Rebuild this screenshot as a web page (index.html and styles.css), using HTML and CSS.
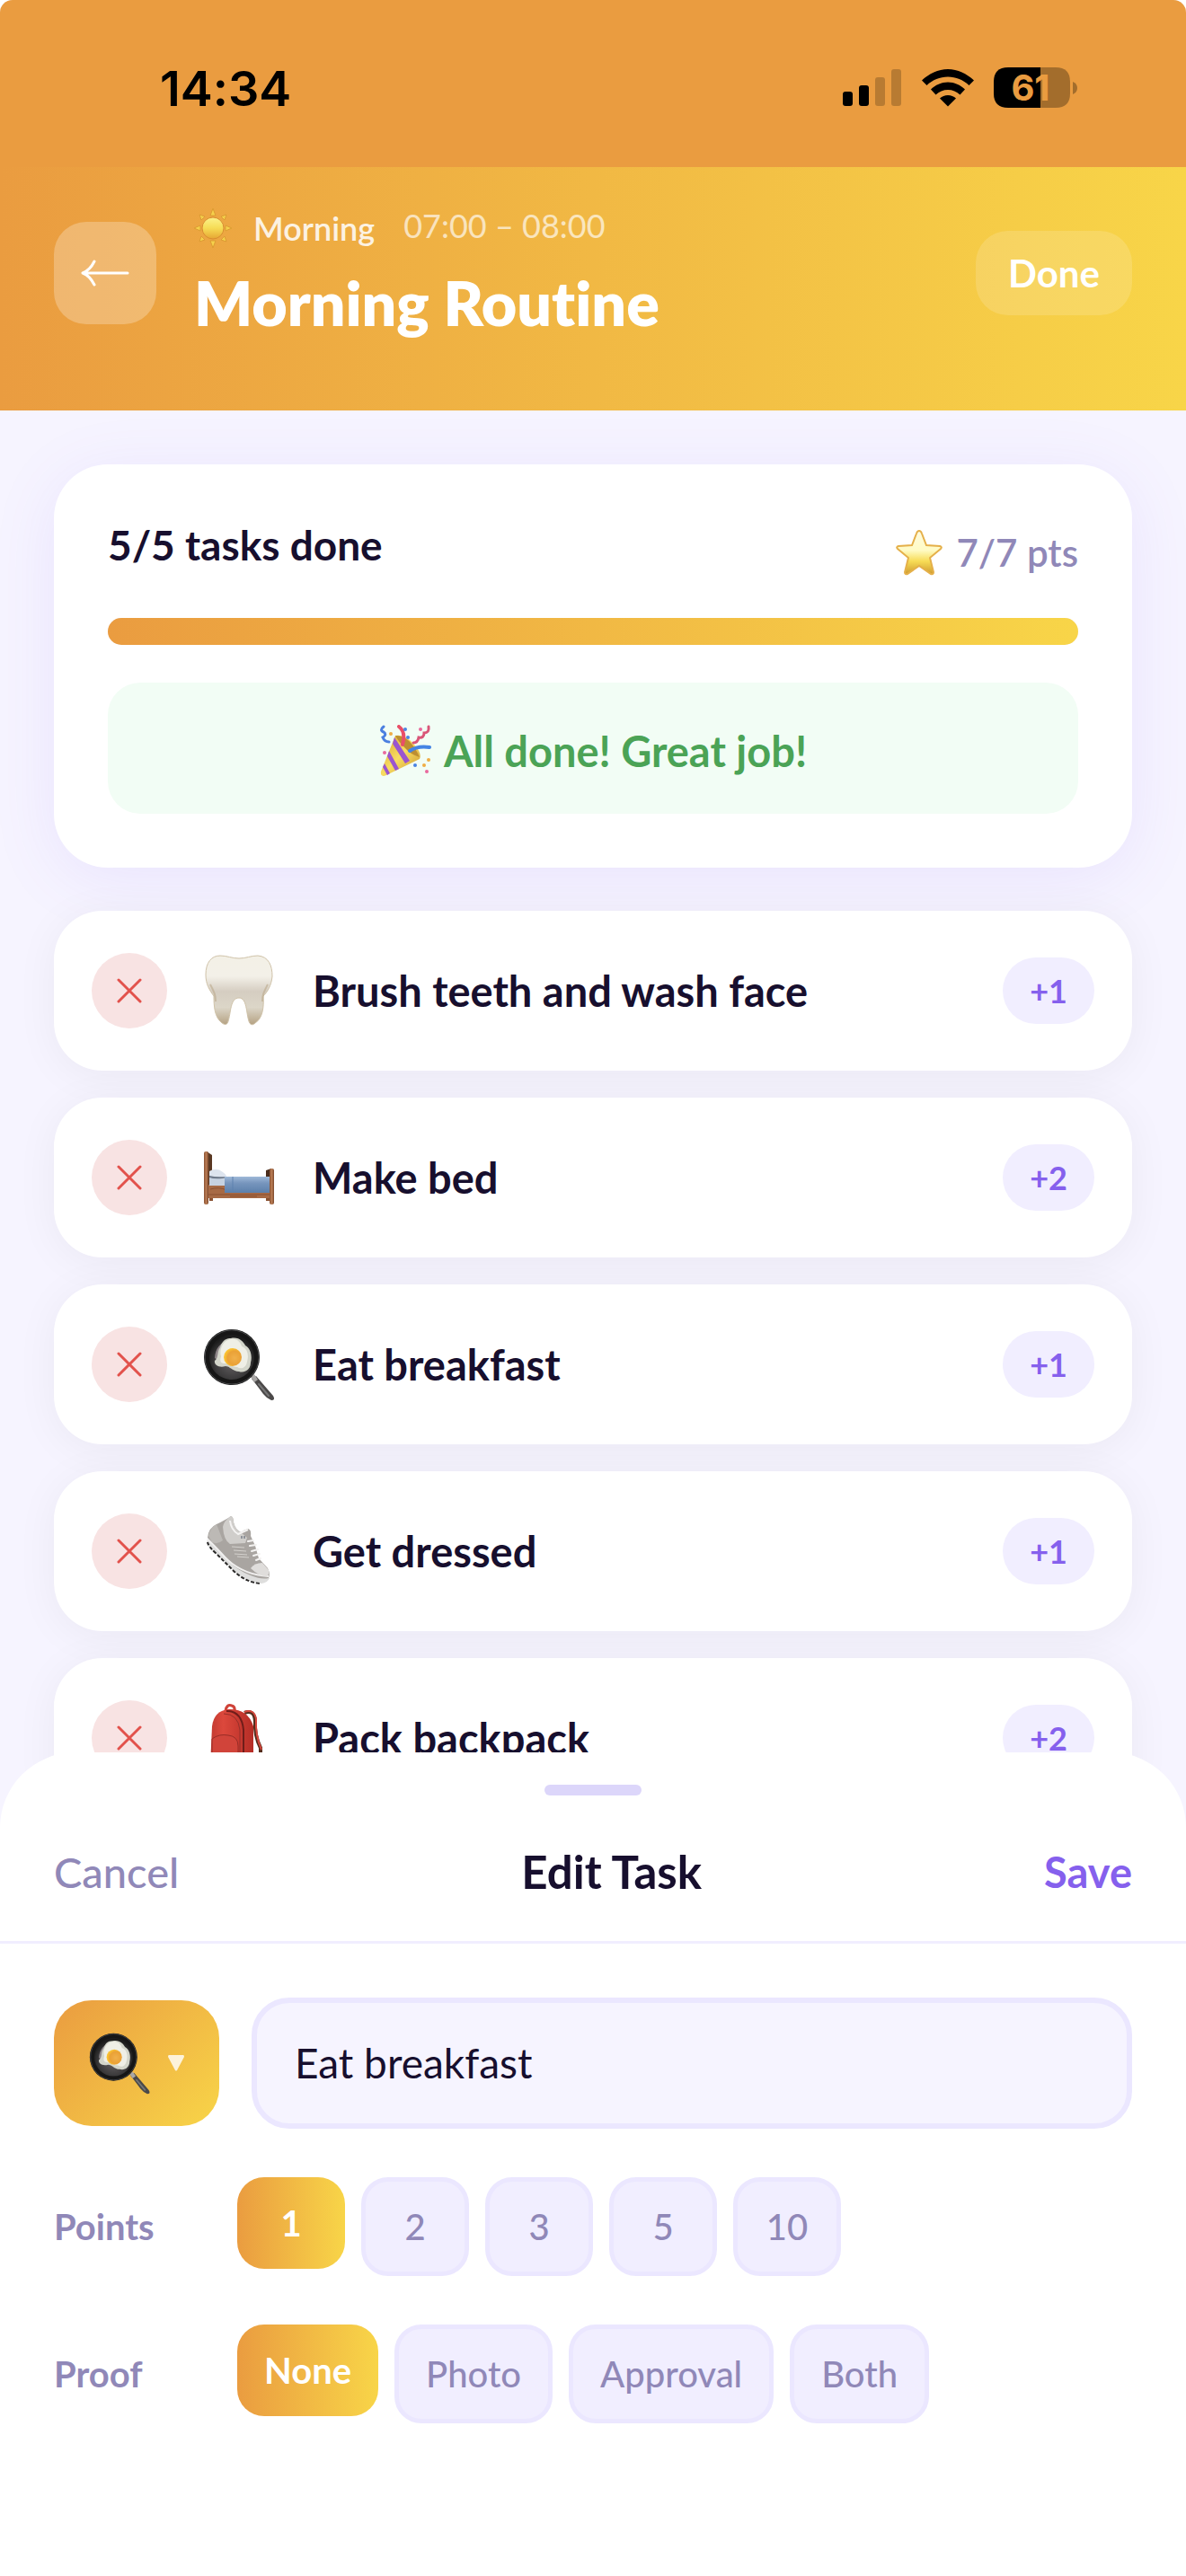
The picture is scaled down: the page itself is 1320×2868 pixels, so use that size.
FILE: index.html
```html
<!DOCTYPE html>
<html lang="en">
<head>
    <meta charset="UTF-8">
    <meta name="viewport" content="width=device-width, initial-scale=1.0">
    <title>Morning Routine</title>
    <link rel="stylesheet" href="styles.css">
</head>
<body>
    <!-- shared icons -->
    <svg class="defs" width="0" height="0" aria-hidden="true">
        <defs>
            <radialGradient id="panInside" cx="50%" cy="60%" r="55%">
                <stop offset="0" stop-color="#666264"/>
                <stop offset="0.7" stop-color="#3b3a3b"/>
                <stop offset="1" stop-color="#1c1c1c"/>
            </radialGradient>
            <radialGradient id="yolk" cx="60%" cy="55%" r="55%">
                <stop offset="0" stop-color="#f0b04a"/>
                <stop offset="0.7" stop-color="#eaa136"/>
                <stop offset="1" stop-color="#fbc22f"/>
            </radialGradient>
            <linearGradient id="gold" x1="0" y1="0" x2="0" y2="1">
                <stop offset="0" stop-color="#fbf28a"/>
                <stop offset="0.5" stop-color="#f6dc55"/>
                <stop offset="1" stop-color="#e6a633"/>
            </linearGradient>
            <linearGradient id="starFill" x1="0" y1="0" x2="0" y2="1">
                <stop offset="0" stop-color="#fffbe0"/>
                <stop offset="0.45" stop-color="#fffbc4"/>
                <stop offset="0.7" stop-color="#f7dc56"/>
                <stop offset="1" stop-color="#cf9b30"/>
            </linearGradient>
            <linearGradient id="cone" x1="0" y1="0" x2="1" y2="1">
                <stop offset="0" stop-color="#d9a42c"/>
                <stop offset="0.5" stop-color="#f8dc62"/>
                <stop offset="1" stop-color="#c8932a"/>
            </linearGradient>
            <linearGradient id="enamel" x1="0" y1="0" x2="0" y2="1">
                <stop offset="0" stop-color="#f3f0e6"/>
                <stop offset="0.3" stop-color="#f3f0e8"/>
                <stop offset="0.52" stop-color="#d5cdc1"/>
                <stop offset="0.75" stop-color="#dcd6c8"/>
                <stop offset="1" stop-color="#b5a283"/>
            </linearGradient>
            <linearGradient id="blanket" x1="0" y1="0" x2="0" y2="1">
                <stop offset="0" stop-color="#9fb9d8"/>
                <stop offset="0.4" stop-color="#7795bd"/>
                <stop offset="1" stop-color="#5c80ab"/>
            </linearGradient>
            <linearGradient id="wood" x1="0" y1="0" x2="1" y2="0">
                <stop offset="0" stop-color="#8a5233"/>
                <stop offset="0.5" stop-color="#b97c54"/>
                <stop offset="1" stop-color="#7c482c"/>
            </linearGradient>
            <linearGradient id="bag" x1="0" y1="0" x2="1" y2="0">
                <stop offset="0" stop-color="#c23a30"/>
                <stop offset="0.3" stop-color="#dc483c"/>
                <stop offset="1" stop-color="#b52d26"/>
            </linearGradient>
            <symbol id="cross" viewBox="0 0 28 28">
                <path d="M2 2L26 26M26 2L2 26" fill="none" stroke="#e2524c" stroke-width="3" stroke-linecap="round"/>
            </symbol>
            <symbol id="pan" viewBox="0 0 82 82">
                <path d="M54 57L59 54L78 76Q81 81 76 81Q71 79 67 74Q62 67 54 57Z" fill="#4b4949"/>
                <path d="M53 55L57 52L61 58L57 61Z" fill="#a9a7a6"/>
                <path d="M62 63L73 76" stroke="#777" stroke-width="2" stroke-linecap="round"/>
                <circle cx="32" cy="33" r="31" fill="#161616"/>
                <circle cx="32" cy="33" r="30" fill="none" stroke="#48494a" stroke-width="1"/>
                <circle cx="32" cy="33" r="25" fill="url(#panInside)"/>
                <path d="M13 34Q14 18 29 14Q18 22 18 38Z" fill="#8d8588"/>
                <path d="M31 12C40 10 45 16 47 20C53 23 55 32 53 39C53 47 46 51 40 49C33 49 30 43 25 43C18 45 12 42 13 37C18 33 15 27 19 22C21 16 24 12 31 12Z" fill="#d3d5ca"/>
                <path d="M31 13C38 12 42 17 43 21C50 23 51 32 49 38C48 45 42 47 38 44C33 44 29 41 25 40C20 40 18 38 20 32C18 26 21 14 31 13Z" fill="#efefe6"/>
                <circle cx="33" cy="33" r="10" fill="url(#yolk)"/>
            </symbol>
        </defs>
    </svg>

    <div class="status-bar">
        <span class="clock">14:34</span>
        <div class="status-icons">
            <svg width="66" height="42" viewBox="0 0 66 42">
                <rect x="0" y="25" width="11" height="16" rx="3"/>
                <rect x="18" y="18" width="11" height="23" rx="3"/>
                <rect x="36" y="9" width="11" height="32" rx="3" opacity="0.21"/>
                <rect x="54" y="0" width="11" height="41" rx="3" opacity="0.21"/>
            </svg>
            <svg width="58" height="42" viewBox="0 0 58 42">
                <path d="M29 0C40 0 50 5 58 12.500L52.500 18C46 12 38 8.500 29 8.500C20 8.500 12 12 5.500 18L0 12.500C8 5 18 0 29 0Z"/>
                <path d="M29 14.500C36 14.500 43 17.500 48 22.500L42.500 28.500C39 25 34 23 29 23C24 23 19 25 15.500 28.500L10 22.500C15 17.500 22 14.500 29 14.500Z"/>
                <path d="M29 29C32.500 29 35.500 30.500 38 32.500L29 41.500L20 32.500C22.500 30.500 25.500 29 29 29Z"/>
            </svg>
            <svg width="94" height="46" viewBox="0 0 94 46">
                <path d="M16 0H52V45H16Q0 45 0 29V16Q0 0 16 0Z"/>
                <path d="M52 0H69Q85 0 85 16V29Q85 45 69 45H52Z" opacity="0.3"/>
                <path d="M88 16Q93 18 93 23Q93 28 88 30Z" opacity="0.3"/>
                <text class="battery-text" x="41" y="37" text-anchor="middle">61</text>
            </svg>
        </div>
    </div>

    <header class="header">
        <button class="back" aria-label="Back">
            <svg width="54" height="30" viewBox="0 0 54 30" fill="none" stroke="#fff" stroke-width="3" stroke-linecap="round" stroke-linejoin="round">
                <path d="M52 15H2M15 2Q10 12 2 15Q10 18 15 28"/>
            </svg>
        </button>
        <div class="heading">
            <div class="meta">
                <svg width="42" height="44" viewBox="0 0 42 44">
                    <g fill="#f5d04b" stroke="#dc9c33" stroke-width="1">
                        <path d="M21 0L24 8H18Z"/>
                        <path d="M21 44L24 36H18Z"/>
                        <path d="M0 22L7 19V25Z"/>
                        <path d="M42 22L35 19V25Z"/>
                        <path d="M6 7L12 9L8 13Z"/>
                        <path d="M36 7L34 13L30 9Z"/>
                        <path d="M6 37L8 31L12 35Z"/>
                        <path d="M36 37L30 35L34 31Z"/>
                    </g>
                    <circle cx="21" cy="22" r="12" fill="url(#gold)" stroke="#d98d31" stroke-width="1"/>
                </svg>
                <span class="period">Morning</span>
                <span class="time">07:00 – 08:00</span>
            </div>
            <h1>Morning Routine</h1>
        </div>
        <button class="done">Done</button>
    </header>

    <main class="content">
        <section class="progress-card">
            <div class="progress-head">
                <h2>5/5 tasks done</h2>
                <span class="points-total">
                    <svg width="54" height="52" viewBox="0 0 54 52">
                        <path d="M27 2Q29 2 30 5L35 18L50 19Q53 20 51 22L39 32L43 48Q43 51 40 50L27 41L14 50Q11 51 11 48L15 32L3 22Q1 20 4 19L19 18L24 5Q25 2 27 2Z" fill="url(#starFill)" stroke="#e5b04a" stroke-width="2"/>
                    </svg>
                    7/7 pts
                </span>
            </div>
            <div class="bar"><div class="bar-fill" style="width: 100%"></div></div>
            <div class="banner">
                <svg width="58" height="58" viewBox="0 0 58 58">
                    <path d="M18 12Q29 10 39 22Q48 32 45 38L8 56Q1 59 2 52Z" fill="url(#cone)"/>
                    <path d="M15 21L29 43L34 40L17 14ZM9 35L18 51L22 49L11 29ZM4 47L9 56L12 54L6 43Z" fill="#9a55cf"/>
                    <path d="M18 12Q34 11 45 36Q35 33 29 26Q21 18 18 12Z" fill="#bd8e31"/>
                    <path d="M22 2Q30 8 26 22" fill="none" stroke="#e94f68" stroke-width="4" stroke-linecap="round"/>
                    <path d="M34 29Q43 23 56 25" fill="none" stroke="#4484e4" stroke-width="4" stroke-linecap="round"/>
                    <path d="M5 2Q0 6 5 8Q9 11 4 14Q6 19 11 19" fill="none" stroke="#4b7fe0" stroke-width="3" stroke-linecap="round"/>
                    <path d="M55 2Q56 9 50 9Q50 15 44 14Q43 20 38 20" fill="none" stroke="#d95578" stroke-width="3" stroke-linecap="round"/>
                    <g fill="#4a83e3"><circle cx="29" cy="5" r="2"/><circle cx="32" cy="14" r="2"/><circle cx="40" cy="45" r="2"/></g>
                    <g fill="#e9699d"><circle cx="46" cy="5" r="2"/><circle cx="6" cy="31" r="2"/><circle cx="53" cy="52" r="2"/></g>
                    <g fill="#efad45"><circle cx="13" cy="10" r="2"/><circle cx="55" cy="39" r="2"/><circle cx="50" cy="45" r="2"/></g>
                </svg>
                All done! Great job!
            </div>
        </section>

        <ul class="tasks">
            <li class="task">
                <button class="remove" aria-label="Remove task"><svg width="28" height="28"><use href="#cross"/></svg></button>
                <svg class="task-icon" viewBox="0 0 82 82">
                    <path d="M19 2C27 2 32 5 40 5C48 5 53 2 61 2C73 3 77 13 77 25C76 36 71 43 67 47C68 60 66 72 58 77C55 80 52 79 51 75C48 66 49 49 40 49C30 49 31 66 28 75C27 80 23 79 20 76C13 70 12 59 12 47C7 40 3 34 3 23C3 10 9 2 19 2Z" fill="url(#enamel)" stroke="#cfc2a8" stroke-width="1"/>
                    <path d="M8 34C12 42 14 45 14 53M72 34C68 42 66 45 66 53" fill="none" stroke="#bba98b" stroke-width="2" opacity="0.6"/>
                </svg>
                <span class="task-name">Brush teeth and wash face</span>
                <span class="badge">+1</span>
            </li>
            <li class="task">
                <button class="remove" aria-label="Remove task"><svg width="28" height="28"><use href="#cross"/></svg></button>
                <svg class="task-icon" viewBox="0 0 82 82">
                    <path d="M4 12L10 16V55H4Z" fill="#5a3822"/>
                    <path d="M70 33L76 31V50H70Z" fill="#4a2c1b"/>
                    <rect x="7" y="62" width="4" height="5" fill="#8a5233"/>
                    <rect x="70" y="62" width="4" height="5" fill="#8a5233"/>
                    <rect x="5" y="49" width="71" height="15" fill="#a76a45"/>
                    <path d="M6 60H75M8 54Q18 51 26 55M30 62H60" stroke="#8a5031" stroke-width="1" fill="none"/>
                    <rect x="7" y="41" width="20" height="9" fill="#c6d2e1"/>
                    <path d="M7 34Q15 29 22 35Q28 39 25 42Q16 43 7 40Z" fill="#dde4ee"/>
                    <path d="M7 39Q15 41 26 40Q25 42 22 42Q12 43 7 41Z" fill="#6f7a8b"/>
                    <rect x="24" y="40" width="50" height="18" fill="url(#blanket)"/>
                    <path d="M33 40V58" stroke="#5f82af" stroke-width="1"/>
                    <rect x="1" y="12" width="5" height="59" rx="2" fill="url(#wood)"/>
                    <rect x="74" y="31" width="5" height="40" rx="2" fill="url(#wood)"/>
                </svg>
                <span class="task-name">Make bed</span>
                <span class="badge">+2</span>
            </li>
            <li class="task">
                <button class="remove" aria-label="Remove task"><svg width="28" height="28"><use href="#cross"/></svg></button>
                <svg class="task-icon"><use href="#pan"/></svg>
                <span class="task-name">Eat breakfast</span>
                <span class="badge">+1</span>
            </li>
            <li class="task">
                <button class="remove" aria-label="Remove task"><svg width="28" height="28"><use href="#cross"/></svg></button>
                <svg class="task-icon" viewBox="0 0 82 82">
                    <path d="M5 27L4 33Q8 40 16 45L34 63Q48 76 65 77Q72 76 74 71L70 69Q45 68 5 27Z" fill="#dededd"/>
                    <path d="M5 31Q6 36 15 44L34 63Q48 76 64 77" fill="none" stroke="#292827" stroke-width="2" stroke-dasharray="4 2"/>
                    <path d="M31 2Q34 3 34 9Q36 17 42 20Q46 17 50 16Q54 17 53 24L58 35L62 49L72 60Q75 66 73 71Q65 73 53 68Q36 62 24 47L5 26Q6 15 15 11Q25 6 31 2Z" fill="#a9a5a1"/>
                    <path d="M31 2Q34 3 34 9Q36 17 42 20L49 26L47 32L30 33Q23 29 22 14Q23 7 31 2Z" fill="#d0cecb"/>
                    <path d="M30 7Q31 17 39 22L50 17" fill="none" stroke="#f4f3f2" stroke-width="2"/>
                    <path d="M6 24Q8 15 15 11L22 29Q16 34 10 31Z" fill="#bcb9b5"/>
                    <path d="M5 28Q10 32 20 43Q40 67 73 69" fill="none" stroke="#f0efee" stroke-width="2"/>
                    <path d="M53 60Q57 54 66 54L73 62Q74 67 71 69Q62 69 53 60Z" fill="#dfdddb"/>
                    <path d="M32 36L46 37M34 40L48 41M35 44L49 45M38 47L51 48" stroke="#d5d2ce" stroke-width="1"/>
                    <path d="M50 30L56 29M52 35L59 34M54 41L61 39M56 46L63 44M59 51L64 49" stroke="#f4f3f2" stroke-width="2" stroke-linecap="round"/>
                    <path d="M43 24V27M46 24V27" stroke="#4f5968" stroke-width="1"/>
                </svg>
                <span class="task-name">Get dressed</span>
                <span class="badge">+1</span>
            </li>
            <li class="task">
                <button class="remove" aria-label="Remove task"><svg width="28" height="28"><use href="#cross"/></svg></button>
                <svg class="task-icon" viewBox="0 0 82 82">
                    <path d="M46 13Q57 9 58 22Q57 38 64 52V76" fill="none" stroke="#542d1d" stroke-width="4"/>
                    <path d="M46 12Q57 8 59 20Q58 38 65 54" fill="none" stroke="#d4463c" stroke-width="2"/>
                    <path d="M25 11Q26 3 32 5Q36 6 35 12" fill="none" stroke="#cf4339" stroke-width="3"/>
                    <path d="M10 28Q12 11 28 9Q50 8 56 28V74Q56 80 46 80H14Q8 79 8 72Z" fill="url(#bag)"/>
                    <path d="M26 11Q43 11 45 32V78" fill="none" stroke="#6f1d1a" stroke-width="2"/>
                    <path d="M23 14Q39 14 41 32V78" fill="none" stroke="#96302a" stroke-width="1"/>
                    <path d="M10 42Q18 36 28 38Q39 39 39 50V76H10Z" fill="#d1443a" stroke="#982c26" stroke-width="1"/>
                </svg>
                <span class="task-name">Pack backpack</span>
                <span class="badge">+2</span>
            </li>
        </ul>
    </main>

    <!-- edit sheet -->
    <form class="sheet" onsubmit="return false">
        <div class="handle"></div>
        <div class="sheet-head">
            <button type="button" class="link cancel">Cancel</button>
            <h2>Edit Task</h2>
            <button type="submit" class="link save">Save</button>
        </div>
        <div class="sheet-body">
            <div class="name-row">
                <button type="button" class="picker" aria-label="Choose icon">
                    <svg width="70" height="70"><use href="#pan"/></svg>
                    <svg width="18" height="18" viewBox="0 0 18 18"><path d="M1 0H17Q18 0 18 2L10 17Q9 18 8 17L0 2Q0 0 1 0Z" fill="#fff" opacity="0.8"/></svg>
                </button>
                <input class="name-input" type="text" value="Eat breakfast" aria-label="Task name">
            </div>
            <div class="option-row">
                <span class="option-label" id="pointsLabel">Points</span>
                <div class="chips" role="group" aria-labelledby="pointsLabel">
                    <button type="button" class="chip point selected">1</button>
                    <button type="button" class="chip point">2</button>
                    <button type="button" class="chip point">3</button>
                    <button type="button" class="chip point">5</button>
                    <button type="button" class="chip point">10</button>
                </div>
            </div>
            <div class="option-row">
                <span class="option-label" id="proofLabel">Proof</span>
                <div class="chips" role="group" aria-labelledby="proofLabel">
                    <button type="button" class="chip selected">None</button>
                    <button type="button" class="chip">Photo</button>
                    <button type="button" class="chip">Approval</button>
                    <button type="button" class="chip">Both</button>
                </div>
            </div>
        </div>
    </form>
</body>
</html>
```

FILE: styles.css
```css
* {
    box-sizing: border-box;
}
html {
    background-color: #fff;
}
body {
    margin: 0;
    min-height: 100vh;
    background-color: #f6f4ff;
    border-radius: 14px 14px 0 0;
    overflow: hidden;
    color: #170f2e;
    font-family: Lato, "Noto Sans", sans-serif;
    font-variant-ligatures: none;
}
h1, h2, ul {
    margin: 0;
    padding: 0;
}
button {
    font-family: inherit;
    border: none;
    padding: 0;
    cursor: pointer;
}
svg {
    display: block;
    flex-shrink: 0;
}
.defs {
    position: absolute;
}

/* status bar */
.status-bar {
    display: flex;
    justify-content: space-between;
    align-items: center;
    height: 186px;
    padding: 10px 120px 0 178px;
    background-color: #ea9c40;
    color: #000;
}
.clock {
    font-family: Inter, sans-serif;
    font-size: 54px;
    font-weight: 600;
}
.status-icons {
    display: flex;
    align-items: center;
    gap: 22px;
}
.battery-text {
    font-family: Inter, sans-serif;
    font-size: 40px;
    font-weight: 700;
    fill: #ea9c40;
}

/* header */
.header {
    display: flex;
    align-items: center;
    padding: 45px 60px 80px;
    background: linear-gradient(90deg, #ea9c40, #f8d548);
    color: #fff;
}
.back {
    display: flex;
    align-items: center;
    justify-content: center;
    width: 114px;
    height: 114px;
    border-radius: 36px;
    background-color: rgba(255, 255, 255, 0.25);
}
.heading {
    flex: 1;
    padding-left: 42px;
}
.meta {
    display: flex;
    align-items: center;
    height: 46px;
}
.period {
    margin-left: 24px;
    font-size: 36px;
    font-weight: 600;
    line-height: 46px;
    opacity: 0.85;
}
.time {
    margin-left: 32px;
    font-size: 36px;
    line-height: 40px;
    align-self: flex-start;
    opacity: 0.65;
}
.heading h1 {
    padding-top: 20px;
    font-size: 68px;
    font-weight: 800;
    line-height: 80px;
}
.done {
    height: 94px;
    padding: 0 36px;
    border-radius: 36px;
    background-color: rgba(255, 255, 255, 0.15);
    color: #fff;
    font-size: 42px;
    font-weight: 700;
}

/* progress */
.content {
    display: flex;
    flex-direction: column;
    gap: 48px;
    padding: 60px;
}
.progress-card {
    padding: 60px;
    border-radius: 60px;
    background-color: #fff;
    box-shadow: 0 12px 72px rgba(124, 92, 231, 0.1);
}
.progress-head {
    display: flex;
    justify-content: space-between;
}
.progress-head h2 {
    font-size: 46px;
    font-weight: 700;
    line-height: 60px;
}
.points-total {
    display: flex;
    align-items: center;
    gap: 14px;
    height: 75px;
    color: #9088b8;
    font-size: 42px;
    font-weight: 600;
}
.bar {
    height: 30px;
    margin-top: 36px;
    border-radius: 15px;
    background-color: #f1eeff;
}
.bar-fill {
    height: 100%;
    border-radius: 15px;
    background: linear-gradient(90deg, #ea9c40, #f8d548);
}
.banner {
    display: flex;
    align-items: center;
    justify-content: center;
    gap: 14px;
    height: 146px;
    padding-top: 6px;
    margin-top: 42px;
    border-radius: 36px;
    background-color: #f2fdf5;
    color: #4ba356;
    font-size: 47px;
    font-weight: 700;
}

/* tasks */
.tasks {
    display: flex;
    flex-direction: column;
    gap: 30px;
    list-style: none;
}
.task {
    display: flex;
    align-items: center;
    gap: 40px;
    height: 178px;
    padding: 0 42px;
    border-radius: 54px;
    background-color: #fff;
    box-shadow: 0 6px 48px rgba(0, 0, 0, 0.05);
}
.remove {
    display: flex;
    align-items: center;
    justify-content: center;
    width: 84px;
    height: 84px;
    border-radius: 50%;
    background-color: #f8e3e3;
}
.task-icon {
    width: 82px;
    height: 82px;
}
.task-name {
    flex: 1;
    font-size: 47px;
    font-weight: 700;
}
.badge {
    padding: 0 30px;
    border-radius: 37px;
    background-color: #f1eeff;
    color: #8560ed;
    font-size: 36px;
    font-weight: 700;
    line-height: 74px;
}

/* edit sheet */
.sheet {
    position: fixed;
    left: 0;
    right: 0;
    bottom: 0;
    padding: 36px 0 170px;
    border-radius: 84px 84px 0 0;
    background-color: #fff;
}
.handle {
    width: 108px;
    height: 12px;
    margin: 0 auto;
    border-radius: 6px;
    background-color: #dcd6fa;
}
.sheet-head {
    display: flex;
    align-items: center;
    justify-content: space-between;
    padding: 52px 60px 44px;
    border-bottom: 3px solid #f1eeff;
}
.sheet-head h2 {
    font-size: 51px;
    font-weight: 700;
    line-height: 66px;
}
.link {
    background: none;
    font-size: 47px;
}
.cancel {
    color: #9088b8;
    font-weight: 500;
}
.save {
    color: #8560ed;
    font-weight: 700;
}
.sheet-body {
    display: flex;
    flex-direction: column;
    gap: 54px;
    padding: 60px 60px 0;
}
.name-row {
    display: flex;
    align-items: center;
    gap: 36px;
}
.picker {
    display: flex;
    align-items: center;
    justify-content: center;
    gap: 18px;
    width: 184px;
    height: 140px;
    border-radius: 42px;
    background: linear-gradient(135deg, #ea9c40, #f8d548);
}
.name-input {
    flex: 1;
    height: 146px;
    padding: 0 42px 2px;
    border: 6px solid #ebe7ff;
    border-radius: 42px;
    background-color: #f6f4ff;
    color: #170f2e;
    font-family: inherit;
    font-size: 46px;
}
.option-row {
    display: flex;
    align-items: center;
}
.option-label {
    width: 204px;
    color: #9088b8;
    font-size: 40px;
    font-weight: 700;
}
.chips {
    display: flex;
    align-items: flex-start;
    gap: 18px;
}
.chip {
    height: 110px;
    padding: 0 30px;
    border: 5px solid #ebe7ff;
    border-radius: 30px;
    background-color: #f1eeff;
    color: #9088b8;
    font-size: 40px;
    font-weight: 500;
}
.point {
    width: 120px;
    padding: 0;
}
.chip.selected {
    height: 102px;
    border: none;
    background: linear-gradient(90deg, #ea9c40, #f8d548);
    color: #fff;
    font-weight: 700;
}
```
